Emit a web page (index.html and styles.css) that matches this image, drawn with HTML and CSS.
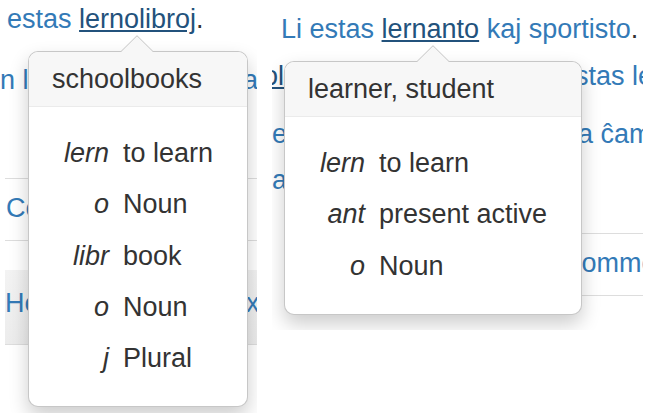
FILE: index.html
```html
<!DOCTYPE html>
<html>
<head>
<meta charset="utf-8">
<link rel="stylesheet" href="styles.css">
</head>
<body>
<div class="collage">
  <section class="shot shot-left">
    <p class="line line-first"><span class="link">estas </span><span class="word">lernolibroj</span>.</p>
    <p class="line line-split"><span class="link">n l</span><span class="link">a</span></p>
    <div class="list">
      <div class="list-item link">Comments</div>
    </div>
    <div class="band"><span class="link">He</span><span class="link">Next</span></div>

    <div class="popover pop-left">
      <svg class="arrow" width="34" height="17" viewBox="0 0 34 17"><path d="M0 17.5 L17 0.7 L34 17.5" fill="#f7f7f7" stroke="#c4c4c4" stroke-width="1"/></svg>
      <div class="pop-title">schoolbooks</div>
      <div class="pop-body">
        <i>lern</i><span>to learn</span>
        <i>o</i><span>Noun</span>
        <i>libr</i><span>book</span>
        <i>o</i><span>Noun</span>
        <i>j</i><span>Plural</span>
      </div>
    </div>
  </section>

  <section class="shot shot-right">
    <p class="line line-top"><span class="link">Li estas </span><span class="word">lernanto</span><span class="link"> kaj sportisto</span>.</p>
    <p class="line line-two"><span class="word cut">ol</span><span class="link far">estas lernanto</span></p>
    <p class="line line-three"><span class="link">e</span><span class="link far2">a ĉambro</span></p>
    <p class="line line-four"><span class="link">a</span></p>
    <div class="list list-right">
      <div class="list-item link">Comments</div>
    </div>

    <div class="popover pop-right">
      <svg class="arrow" width="34" height="17" viewBox="0 0 34 17"><path d="M0 17.5 L17 0.7 L34 17.5" fill="#f7f7f7" stroke="#c4c4c4" stroke-width="1"/></svg>
      <div class="pop-title">learner, student</div>
      <div class="pop-body">
        <i>lern</i><span>to learn</span>
        <i>ant</i><span>present active</span>
        <i>o</i><span>Noun</span>
      </div>
    </div>
  </section>
</div>
</body>
</html>
```
FILE: styles.css
```css
html, body {
  margin: 0;
  padding: 0;
  background: #ffffff;
}
body {
  width: 652px;
  height: 419px;
  overflow: hidden;
  font-family: "Liberation Sans", Arial, sans-serif;
  font-size: 27px;
  color: #333333;
}
.collage {
  display: flex;
  align-items: flex-start;
}
.shot {
  position: relative;
  overflow: hidden;
  background: #ffffff;
  flex: none;
}
.shot-left {
  width: 257px;
  height: 413px;
}
.shot-right {
  width: 371px;
  height: 330px;
  margin-left: 15px;
}
.line {
  margin: 0;
  line-height: 38px;
  white-space: nowrap;
}
.link { color: #337ab7; }
.word {
  color: #23527c;
  text-decoration: underline;
}
.line-first {
  padding-left: 7px;
}
.line-split {
  margin-top: 23px;
  display: flex;
  justify-content: space-between;
  width: 258px;
}
.list {
  margin-top: 79px;
  margin-left: 5px;
  width: 262px;
}
.list-item {
  border-top: 1px solid #dddddd;
  border-bottom: 1px solid #dddddd;
  line-height: 38px;
  padding: 10px 0 13px 1px;
  white-space: nowrap;
}
.band {
  margin-top: 29px;
  margin-left: 5px;
  width: 257px;
  height: 60px;
  padding-top: 14px;
  line-height: 38px;
  background: linear-gradient(#f3f3f3, #ececec);
  border-bottom: 1px solid #dddddd;
  display: flex;
  justify-content: space-between;
  white-space: nowrap;
}
.band .link:last-child {
  margin-right: -5px;
}

/* right shot */
.line-top {
  margin-top: 10px;
  padding-left: 9px;
}
.line-two {
  margin-top: 9px;
  display: flex;
}
.cut { margin-left: -9px; }
.far { margin-left: 276px; }
.line-three {
  margin-top: 20px;
  display: flex;
}
.far2 { margin-left: 291px; }
.line-four {
  margin-top: 8px;
}
.list-right {
  margin-top: 34px;
  margin-left: 30px;
  width: 400px;
}
.list-right .list-item {
  padding-left: 260px;
}

/* popovers */
.popover {
  position: absolute;
  background: #ffffff;
  border: 1px solid rgba(0, 0, 0, 0.22);
  border-radius: 10px;
  box-shadow: 0 9px 19px rgba(0, 0, 0, 0.2);
  color: #333333;
}
.pop-left {
  left: 28px;
  top: 51px;
  width: 218px;
}
.pop-right {
  left: 12px;
  top: 61px;
  width: 296px;
}
.arrow {
  position: absolute;
  top: -17px;
  display: block;
}
.pop-left .arrow { left: 91px; }
.pop-right .arrow { left: 131px; }
.pop-title {
  background: #f7f7f7;
  border-bottom: 1px solid #ebebeb;
  border-radius: 9px 9px 0 0;
  padding: 8px 23px;
  line-height: 38px;
  white-space: nowrap;
}
.pop-body {
  display: grid;
  grid-template-columns: 45px auto;
  column-gap: 14px;
  justify-content: start;
  padding: 21px 0 22px 35px;
  line-height: 51.3px;
  white-space: nowrap;
}
.pop-body i {
  text-align: right;
  font-style: italic;
}
```
